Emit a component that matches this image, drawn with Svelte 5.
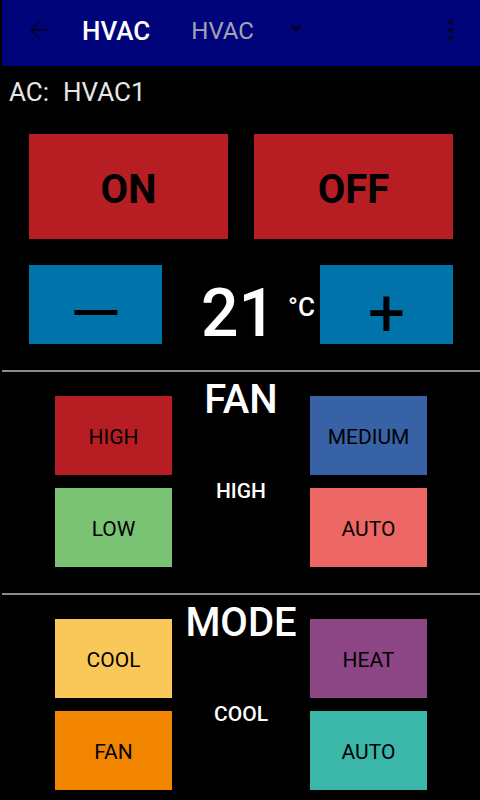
<script>
  let unit = $state('HVAC');
  let power = $state('OFF');
  let temperature = $state(21);
  let settings = $state({ FAN: 'HIGH', MODE: 'COOL' });

  const groups = [
    {
      name: 'FAN',
      options: [
        { label: 'HIGH', tone: 'red' },
        { label: 'MEDIUM', tone: 'blue' },
        { label: 'LOW', tone: 'green' },
        { label: 'AUTO', tone: 'coral' }
      ]
    },
    {
      name: 'MODE',
      options: [
        { label: 'COOL', tone: 'yellow' },
        { label: 'HEAT', tone: 'purple' },
        { label: 'FAN', tone: 'orange' },
        { label: 'AUTO', tone: 'teal' }
      ]
    }
  ];
</script>

<div class="screen">
  <header>
    <button class="icon back" aria-label="Back">
      <svg width="24" height="24" viewBox="0 0 24 24" fill="none" stroke="currentColor" stroke-width="2">
        <path d="M22 12H3M12.5 2.5L3 12l9.5 9.5" />
      </svg>
    </button>
    <h1>HVAC</h1>
    <div class="picker">
      <select aria-label="Unit" bind:value={unit}>
        <option>HVAC</option>
      </select>
      <svg width="14" height="8" viewBox="0 0 14 8" fill="currentColor" aria-hidden="true">
        <path d="M0 0.5h14l-7 7z" />
      </svg>
    </div>
    <button class="icon more" aria-label="More options">
      <svg width="6" height="22" viewBox="0 0 6 22" fill="currentColor">
        <circle cx="3" cy="3" r="2.8" />
        <circle cx="3" cy="11" r="2.8" />
        <circle cx="3" cy="19" r="2.8" />
      </svg>
    </button>
  </header>

  <main>
    <p class="device"><span>AC:</span><span>HVAC1</span></p>

    <div class="power">
      <button class="red" onclick={() => (power = 'ON')}>ON</button>
      <button class="red" onclick={() => (power = 'OFF')}>OFF</button>
    </div>

    <div class="temperature">
      <button aria-label="Lower temperature" onclick={() => temperature--}>—</button>
      <output><span class="value">{temperature}</span><span class="degrees">°C</span></output>
      <button aria-label="Raise temperature" onclick={() => temperature++}>+</button>
    </div>

    {#each groups as group}
      <section>
        <div class="status">
          <h2>{group.name}</h2>
          <p>{settings[group.name]}</p>
        </div>
        {#each group.options as option}
          <button class={option.tone} onclick={() => (settings[group.name] = option.label)}>
            {option.label}
          </button>
        {/each}
      </section>
    {/each}
  </main>
</div>

<style>
  :global(body) {
    margin: 0;
    background: #000;
  }

  .screen {
    box-sizing: border-box;
    min-height: 100vh;
    padding-left: 2px;
    background: #000;
    color: #fff;
    font-family: Roboto, sans-serif;
  }

  h1,
  h2,
  p {
    margin: 0;
  }

  button,
  select {
    margin: 0;
    padding: 0;
    border: 0;
    border-radius: 0;
    font-family: inherit;
    color: #000;
    cursor: pointer;
  }

  header {
    display: flex;
    align-items: center;
    height: 66px;
    padding: 0 26px 0 24px;
    box-sizing: border-box;
    background: #00047a;
    color: #02033a;
  }

  .icon {
    display: flex;
    background: none;
    color: inherit;
  }

  .back {
    margin: 0 30px 6px 2px;
  }

  h1 {
    padding-bottom: 4px;
    font-size: 26px;
    line-height: 32px;
    font-weight: 500;
    color: #fff;
  }

  .picker {
    position: relative;
    width: 112px;
    margin-left: 41px;
    padding-bottom: 4px;
  }

  select {
    display: block;
    width: 100%;
    appearance: none;
    background: none;
    font-size: 24px;
    line-height: 32px;
    color: #a3a3b4;
  }

  .picker svg {
    position: absolute;
    top: 10px;
    right: 0;
    pointer-events: none;
  }

  .more {
    margin: 0 0 6px auto;
  }

  .device {
    display: flex;
    gap: 14px;
    padding: 10px 7px;
    font-size: 26px;
    line-height: 32px;
    color: #e6e6e6;
  }

  .power {
    display: grid;
    grid-template-columns: 1fr 1fr;
    gap: 26px;
    padding: 16px 27px 26px;
  }

  .power button {
    height: 105px;
    padding-top: 6px;
    font-size: 40px;
    font-weight: 700;
  }

  .temperature {
    display: grid;
    grid-template-columns: 133fr 158fr 133fr;
    padding: 0 27px 26px;
  }

  .temperature button {
    height: 79px;
    padding-top: 18px;
    background: #0074aa;
    font-size: 66px;
    line-height: 61px;
  }

  output {
    display: flex;
    justify-content: flex-end;
    gap: 12px;
    height: 79px;
    padding-right: 5px;
  }

  .value {
    padding-top: 10px;
    font-size: 66px;
    line-height: 78px;
    font-weight: 500;
  }

  .degrees {
    padding-top: 26px;
    font-size: 26px;
    line-height: 32px;
    font-weight: 500;
  }

  section {
    display: grid;
    grid-template-columns: 117fr 138fr 117fr;
    grid-template-rows: 79px 79px;
    row-gap: 13px;
    padding: 24px 53px 26px;
    border-top: 2px solid #8a8a8a;
  }

  section button {
    font-size: 21px;
    padding-top: 2px;
  }

  section button:nth-of-type(odd) {
    grid-column: 1;
  }

  section button:nth-of-type(even) {
    grid-column: 3;
  }

  section:last-child {
    padding-bottom: 8px;
  }

  .status {
    grid-column: 2;
    grid-row: 1 / 3;
    display: flex;
    flex-direction: column;
    align-items: center;
    gap: 55px;
    margin-top: -19px;
    font-weight: 500;
  }

  h2 {
    font-size: 40px;
    line-height: 46px;
    font-weight: 500;
  }

  .status p {
    font-size: 21px;
    line-height: 26px;
  }

  .red { background: #b61e23; }
  .blue { background: #3763a6; }
  .green { background: #7ac374; }
  .coral { background: #ed6764; }
  .yellow { background: #fac858; }
  .purple { background: #8c4685; }
  .orange { background: #f18500; }
  .teal { background: #3ab7a9; }
</style>
